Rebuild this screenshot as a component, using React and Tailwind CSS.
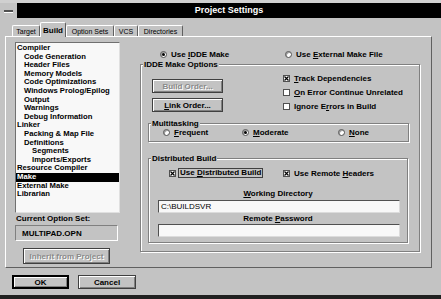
import React from 'react'

const items = [
  ['Compiler', 0],
  ['Code Generation', 1],
  ['Header Files', 1],
  ['Memory Models', 1],
  ['Code Optimizations', 1],
  ['Windows Prolog/Epilog', 1],
  ['Output', 1],
  ['Warnings', 1],
  ['Debug Information', 1],
  ['Linker', 0],
  ['Packing & Map File', 1],
  ['Definitions', 1],
  ['Segments', 2],
  ['Imports/Exports', 2],
  ['Resource Compiler', 0],
  ['Make', 0, true],
  ['External Make', 0],
  ['Librarian', 0],
]

const indents = ['pl-[1px]', 'pl-[8px]', 'pl-[16px]']

function Radio({ on }) {
  return (
    <span className="w-[7px] h-[7px] rounded-full bg-white border border-[#505050] flex items-center justify-center shrink-0 shadow-[inset_1px_1px_0_#999]">
      {on && <span className="w-[3px] h-[3px] rounded-full bg-black" />}
    </span>
  )
}

function Check({ on }) {
  return (
    <span className="w-[7px] h-[7px] bg-white border border-[#505050] flex items-center justify-center shrink-0">
      {on && (
        <svg viewBox="0 0 5 5" className="w-[5px] h-[5px]">
          <path d="M0.5 0.5L4.5 4.5M4.5 0.5L0.5 4.5" stroke="black" strokeWidth="1.2" />
        </svg>
      )}
    </span>
  )
}

function Button({ children, disabled, def, className = '' }) {
  return (
    <div
      className={`flex items-center justify-center bg-[#c3c3c3] shadow-[inset_1px_1px_0_#fff,inset_-1px_-1px_0_#808080] ${
        def ? 'border-2 border-black' : 'border border-[#404040]'
      } ${disabled ? 'text-[#8a8a8a] [text-shadow:1px_1px_0_#fff]' : ''} ${className}`}
    >
      {children}
    </div>
  )
}

function Group({ label, className = '', children }) {
  return (
    <div className={`relative border border-[#808080] shadow-[inset_1px_1px_0_#fff,1px_1px_0_#fff] ${className}`}>
      <span className="absolute left-[2px] top-[-5px] bg-[#c3c3c3] px-[1px] leading-[9px]">{label}</span>
      {children}
    </div>
  )
}

function Field({ children }) {
  return (
    <div className="ml-[9px] w-[242px] h-[13px] bg-[#f8f8f8] border border-t-[#505050] border-l-[#505050] border-r-[#dcdcdc] border-b-[#dcdcdc] flex items-center pl-[2px] font-normal">
      {children}
    </div>
  )
}

export default function App() {
  return (
    <div className="w-[441px] h-[299px] bg-[#c3c3c3] flex flex-col overflow-hidden text-black text-[8px] font-bold leading-[9px] font-['Liberation_Sans',Arial,sans-serif]">
      {/* title bar */}
      <div className="h-[3px] bg-[#d0d0d0]" />
      <div className="flex h-[15px]">
        <div className="w-[17px] flex items-center justify-center">
          <div className="w-[9px] h-[2px] bg-[#505050] shadow-[0_1px_0_#fff]" />
        </div>
        <div className="flex-1 bg-black text-white text-[9px] flex items-center justify-center">Project Settings</div>
      </div>

      {/* tabs */}
      <div className="flex items-end h-[18px] pl-[12px] font-normal text-[7px]">
        <div className="w-[28px] h-[11px] border-t border-l border-white border-r border-r-[#606060] rounded-t-[2px] flex items-center justify-center">Target</div>
        <div className="relative z-10 -mb-px w-[26px] h-[15px] bg-[#c3c3c3] border-t border-l border-white border-r border-r-[#606060] rounded-t-[2px] flex items-center justify-center font-bold text-[8px]">Build</div>
        <div className="w-[48px] h-[11px] border-t border-l border-white border-r border-r-[#606060] rounded-t-[2px] flex items-center justify-center">Option Sets</div>
        <div className="w-[24px] h-[11px] border-t border-l border-white border-r border-r-[#606060] rounded-t-[2px] flex items-center justify-center">VCS</div>
        <div className="w-[45px] h-[11px] border-t border-l border-white border-r border-r-[#606060] rounded-t-[2px] flex items-center justify-center">Directories</div>
      </div>

      {/* panel */}
      <div className="ml-[5px] w-[427px] h-[232px] border border-t-white border-l-white border-r-[#606060] border-b-[#606060] flex pl-[9px] pt-[5px]">
        {/* left column */}
        <div className="w-[105px] flex flex-col">
          <div className="h-[171px] bg-[#f8f8f8] border border-t-[#707070] border-l-[#707070] border-r-[#e0e0e0] border-b-[#e0e0e0] pt-[1px]">
            {items.map(([t, ind, sel]) => (
              <div key={t} className={`h-[8.6px] leading-[8.6px] text-[7.7px] whitespace-nowrap ${indents[ind]} ${sel ? 'bg-black text-white' : ''}`}>
                {t}
              </div>
            ))}
          </div>
          <div className="mt-[1px] h-[9px] pl-[1px]">Current Option Set:</div>
          <div className="mt-[2px] w-[103px] h-[16px] border border-t-[#808080] border-l-[#808080] border-r-white border-b-white flex items-center pl-[6px]">MULTIPAD.OPN</div>
          <Button disabled className="mt-[7px] ml-[8px] w-[87px] h-[16px]">Inherit from Project</Button>
        </div>

        {/* right column */}
        <div className="ml-[20px] w-[280px] flex flex-col">
          <div className="h-[22px] flex items-center pt-[2px] pl-[20px]">
            <div className="w-[125px] flex items-center gap-[4px]">
              <Radio on />
              <span>Use <u>I</u>DDE Make</span>
            </div>
            <div className="flex items-center gap-[4px]">
              <Radio />
              <span>Use <u>E</u>xternal Make File</span>
            </div>
          </div>

          <Group label="IDDE Make Options" className="h-[188px]">
            <div className="flex h-[52px]">
              <div className="pl-[11px] pt-[14px] flex flex-col gap-[5px]">
                <Button disabled className="w-[71px] h-[14px]">Build Order...</Button>
                <Button className="w-[71px] h-[14px]"><span><u>L</u>ink Order...</span></Button>
              </div>
              <div className="ml-[60px] pt-[6px] flex flex-col">
                <div className="h-[14px] flex items-center gap-[4px]"><Check on /><span><u>T</u>rack Dependencies</span></div>
                <div className="h-[14px] flex items-center gap-[4px]"><Check /><span><u>O</u>n Error Continue Unrelated</span></div>
                <div className="h-[14px] flex items-center gap-[4px]"><Check /><span>Ignore E<u>r</u>rors in Build</span></div>
              </div>
            </div>

            <Group label="Multitasking" className="mt-[6px] ml-[7px] w-[261px] h-[19px]">
              <div className="h-full flex items-center pl-[14px]">
                <div className="w-[79px] flex items-center gap-[4px]"><Radio /><span><u>F</u>requent</span></div>
                <div className="w-[96px] flex items-center gap-[4px]"><Radio on /><span><u>M</u>oderate</span></div>
                <div className="flex items-center gap-[4px]"><Radio /><span><u>N</u>one</span></div>
              </div>
            </Group>

            <Group label="Distributed Build" className="mt-[16px] ml-[7px] w-[260px] h-[85px]">
              <div className="flex items-center h-[10px] mt-[9px] pl-[20px]">
                <div className="w-[114px] flex items-center gap-[2px]">
                  <Check on />
                  <span className="border border-[#404040] px-[1px] leading-[8px]">Use <u>D</u>istributed Build</span>
                </div>
                <div className="flex items-center gap-[4px]"><Check on /><span>Use Remote <u>H</u>eaders</span></div>
              </div>
              <div className="mt-[11px] h-[9px] text-center"><u>W</u>orking Directory</div>
              <div className="mt-[2px]"><Field>C:\BUILDSVR</Field></div>
              <div className="mt-[1px] h-[9px] text-center">Remote <u>P</u>assword</div>
              <div className="mt-[1px]"><Field /></div>
            </Group>
          </Group>
        </div>
      </div>

      {/* bottom buttons */}
      <div className="h-[27px] flex pl-[12px] pt-[7px] gap-[9px]">
        <Button def className="w-[57px] h-[14px]">OK</Button>
        <Button className="w-[58px] h-[14px]">Cancel</Button>
      </div>
      <div className="h-[4px] bg-[#202020]" />
    </div>
  )
}
